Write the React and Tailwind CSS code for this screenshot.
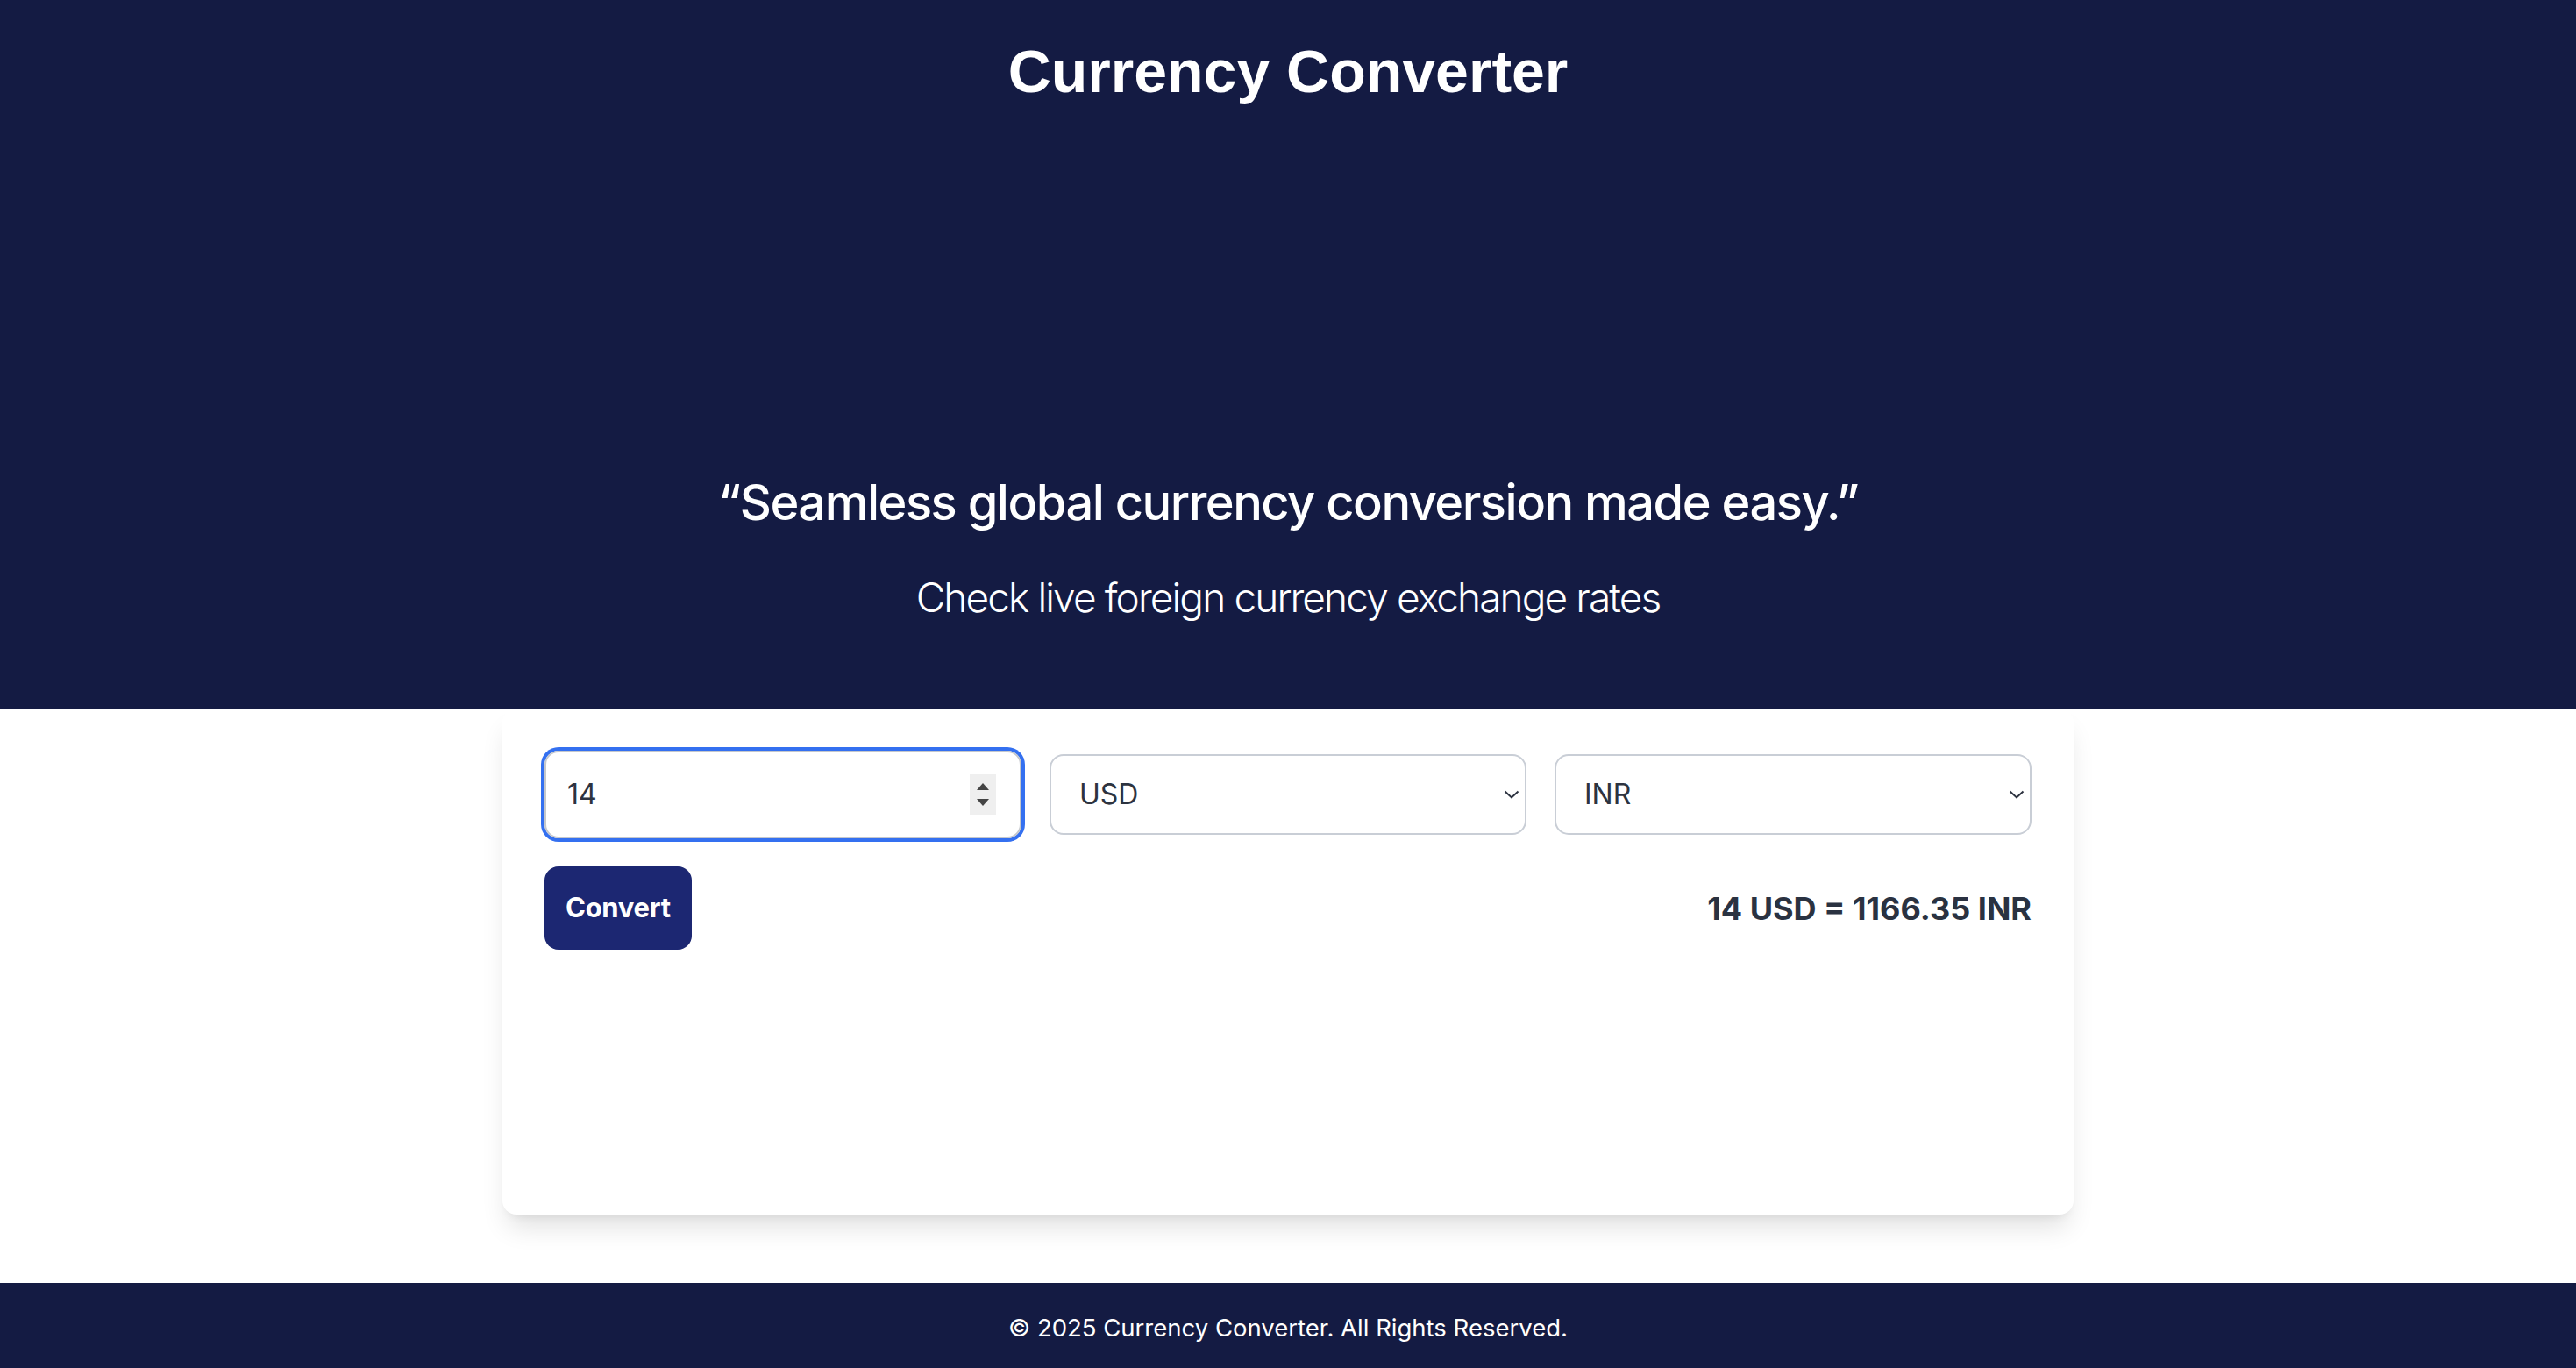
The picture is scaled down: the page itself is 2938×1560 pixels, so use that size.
import { useState } from "react"

const rate = 83.3107

function Chevron() {
  return (
    <svg width="18" height="10" viewBox="0 0 18 10" fill="none" className="shrink-0">
      <path d="M1.5 1.5 L9 8.5 L16.5 1.5" stroke="#2d3340" strokeWidth="2" />
    </svg>
  )
}

function Spinner() {
  return (
    <div className="w-[30px] h-[46px] bg-[#efefef] flex flex-col items-center justify-center gap-[10px]">
      <div className="w-0 h-0 border-l-[7px] border-r-[7px] border-b-[8px] border-l-transparent border-r-transparent border-b-[#444]" />
      <div className="w-0 h-0 border-l-[7px] border-r-[7px] border-t-[8px] border-l-transparent border-r-transparent border-t-[#444]" />
    </div>
  )
}

function Select({ value }) {
  return (
    <div className="h-[92px] border-2 border-[#c9ced6] rounded-2xl pl-8 pr-[6px] flex items-center justify-between text-[32px] text-[#2d3340] bg-white">
      <span>{value}</span>
      <Chevron />
    </div>
  )
}

export default function App() {
  const [amount] = useState(14)
  const [from] = useState("USD")
  const [to] = useState("INR")

  return (
    <div className="min-h-screen flex flex-col bg-white font-['Inter',sans-serif]">
      <header className="bg-[#141b43] text-white text-center h-[808px] flex flex-col items-center">
        <h1 className="pt-[41px] font-['Liberation_Sans',Arial,sans-serif] text-[68px] leading-[80px] font-bold">
          Currency Converter
        </h1>
        <p className="mt-[420px] text-[56px] leading-[64px] font-medium tracking-[-1.5px]">
          “Seamless global currency conversion made easy.”
        </p>
        <p className="mt-[44px] text-[46px] leading-[64px] font-light tracking-[-1.9px]">
          Check live foreign currency exchange rates
        </p>
      </header>

      <main className="flex-1 flex justify-center pb-[78px]">
        <div className="w-[1792px] h-[577px] bg-white rounded-2xl p-12 shadow-[0_20px_30px_-6px_rgba(0,0,0,0.12),0_8px_12px_-8px_rgba(0,0,0,0.1)]">
          <div className="grid grid-cols-3 gap-8 items-center">
            <div className="h-[100px] border-2 border-[#c4c7cc] rounded-2xl pl-6 pr-[27px] flex items-center justify-between text-[32px] text-[#2d3340] shadow-[0_0_0_4px_#3470f0]">
              <span>{amount}</span>
              <Spinner />
            </div>
            <Select value={from} />
            <Select value={to} />
          </div>

          <div className="mt-8 flex items-center justify-between">
            <button className="h-[95px] px-6 bg-[#1c2772] text-white text-[31px] tracking-[-0.3px] font-bold rounded-2xl">
              Convert
            </button>
            <p className="text-[36px] font-bold text-[#2a3241]">
              {amount} {from} = {(amount * rate).toFixed(2)} {to}
            </p>
          </div>
        </div>
      </main>

      <footer className="bg-[#141b43] h-[97px] pt-[6px] flex items-center justify-center text-white text-[27.5px]">
        © 2025 Currency Converter. All Rights Reserved.
      </footer>
    </div>
  )
}
